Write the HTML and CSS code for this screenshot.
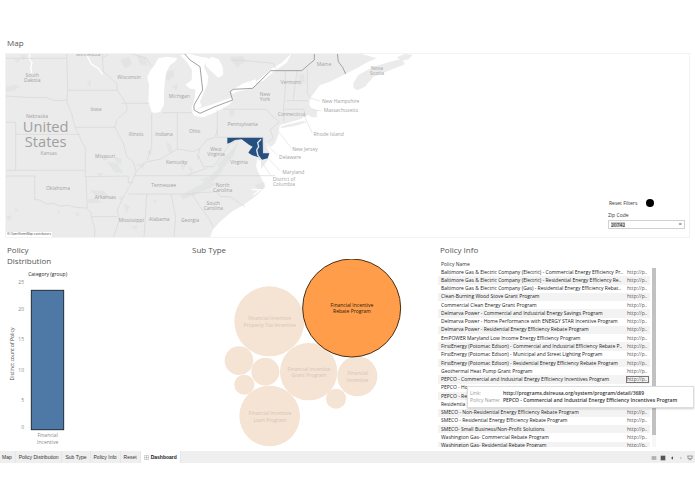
FILE: index.html
```html
<!DOCTYPE html>
<html lang="en">
<head>
<meta charset="utf-8">
<title>Policy Dashboard</title>
<link rel="stylesheet" href="styles.css">
</head>
<body>
<main class="dashboard">
  <section class="map-section">
    <h2 class="title">Map</h2>
    <div class="map">
      <svg class="map-art" viewBox="15 69 2055 555" role="img" aria-label="Map of the eastern United States">
        <path class="land" d="M15 69H1012L1075 69L1130 85L1105 95L1070 115L1040 130L1020 140L990 155L960 165L945 185L930 205L928 225L935 235L952 240L950 262L935 262L925 255L900 268L865 278L842 284L838 290L835 315L825 340L812 352L798 340L808 370L802 392L784 417L780 392L774 390L772 420L788 452L796 470L765 500L730 525L695 545L660 575L638 600L630 624H15Z"/>
        <path class="land" d="M1060 160L1075 135L1120 110L1160 98L1205 86L1215 103L1165 122L1120 140L1095 170L1072 181L1061 175ZM1190 82L1215 72L1238 74L1226 88L1206 92ZM840 291L865 283L910 273L922 276L885 288L845 294Z"/>
        <g class="terrain">
          <path d="M15 172l30-8 16 6-22 12-24 4zM40 90l24-6-10 14zM60 76l22 0-12 16zM360 90l28-10 8 22-20 14zM410 75l26 8 6 24-22-4zM495 125l25-5 4 18-20 14-10-8zM515 170l20-10-5 22zM560 485l40-20 60-10-30 20-50 22-36 2zM600 468l60-58 20-10-24 38-36 34zM650 405l40-40 26-30-16 44-34 40zM320 395l30 4 20 30-26-2zM345 380l18 6 2 18-18-8zM270 480l40 2 22 22-44-6zM262 508l28-4 14 14-36 2zM355 500l16 0-6 14zM372 520l18 10-12 20zM500 335l14 10 4 24-14-4zM545 390l12 10-6 20-8-8zM565 410l14 4-4 18zM590 370l10 12-8 12zM692 80l38-2 6 16-24 18-14-14zM686 242l14-4 6 14-14 10zM895 135l16-4 4 24-14 12zM15 560l22-4-8 18zM42 535l14 4-8 8zM170 545l8-4 2 10zM228 545l12 8-10 8zM260 155l14-5-4 22zM392 590l22-4-6 14zM460 508l12 6-10 8zM765 465l28-8 0 18-18 4zM440 365l14-8 0 20zM405 405l30-8-4 16zM305 385l10-10 10 8-10 10zM290 430l18 0-6 10zM540 495l20-5 10 10-22 8zM600 450l24-10 0 16z"/>
        </g>
        <path class="water" d="M455 245L445 215L447 165L442 140L452 120L462 108L475 85L500 80L532 84L525 95L510 105L500 125L495 150L492 190L492 225L480 246L463 249ZM540 75L570 72L600 80L625 84L612 110L625 140L622 165L612 185L600 215L605 228L582 244L574 238L585 200L586 178L570 176L556 164L575 150L576 120L560 95ZM620 90L636 80L656 88L668 110L670 135L655 143L635 125L618 108ZM575 245L600 235L640 222L688 205L702 205L690 222L650 245L610 262L585 258ZM693 182L730 160L768 148L769 165L750 177L710 185L698 193ZM765 158L815 116L845 98L876 69L860 98L824 122L790 152Z"/>
        <path class="river" d="M90 69l-2 18 8 12-4 16 3 14M262 78l12 24 22 14 12 18"/>
        <path class="river" d="M774 388l-4 20 8 22M782 390l-2 24M755 478l30 2M760 495l18-14"/>
        <path class="state" d="M15 85H200M200 69L203 181H352M15 198L80 202 140 203 165 212 203 210M203 181L200 215 215 250 225 292 238 318 250 345 256 350V440M225 292H345M47 313H238M15 277H47V421M15 421H256M15 438H104V508L118 510 140 522 160 520 180 528 205 526 225 532 260 534M256 440L385 438V458H395M258 440L262 537 272 545 274 560H352M274 560L285 600 283 624M308 69V100L310 125 350 160 352 181 378 220 382 240 350 270 345 292 370 340 380 380 400 395 408 425 395 458 370 500 352 540 358 570 340 624M308 85L330 69M365 220H448M388 69L440 85 454 110M455 250V350L442 390M487 248H575M532 250V357M408 425L440 395 480 388 510 370 532 357 580 365 600 355 620 330 645 322 652 300M652 240V322M404 437H825M385 492H575M440 492L432 624M513 492L527 560 522 624M575 490L600 530 625 562 640 592M575 490L650 485 662 500 690 500 735 530M594 375L610 410 640 410 670 370 690 340 715 330M560 436L620 415M594 375L600 355M652 322H790M670 238H800L808 250 838 275 810 300 820 325 805 335M856 122V180L850 240 852 278M892 122L885 165 880 210M860 212H925M922 115V190L932 205M850 238H912L915 262M791 323V370H808M690 90L735 92 780 96 820 100 828 118"/>
        <path class="leader" d="M930 204L960 213M935 240L965 242M915 262L937 310M836 305L875 355M800 345L832 375M806 387L842 424M765 365L812 436"/>
        <path class="country" d="M552 69L570 90L600 110L608 180L582 225V240L600 250L645 230L698 210L690 185L700 178L758 175L812 122H905L925 105L943 90V69M1012 69L1015 95L1028 112L1037 132"/>
        <path class="selected" d="M682 323H788L789 370H808L803 385L786 389L778 379L773 373L775 382L755 375L745 368L750 360L758 350L748 345L735 335L725 328L705 330L690 338L682 341Z"/>
        <path class="bay" d="M783 328L773 338L776 350L770 360L774 378"/>
        <g class="places">
          <text x="265" y="77">Minnesota</text>
          <text x="97" y="140">South</text><text x="97" y="155">Dakota</text>
          <text x="387" y="148">Wisconsin</text>
          <text x="538" y="204">Michigan</text>
          <text x="288" y="244">Iowa</text>
          <text x="111" y="263">Nebraska</text>
          <text x="408" y="319">Illinois</text>
          <text x="492" y="319">Indiana</text>
          <text x="584" y="310">Ohio</text>
          <text x="146" y="374">Kansas</text>
          <text x="315" y="383">Missouri</text>
          <text x="530" y="401">Kentucky</text>
          <text x="174" y="480">Oklahoma</text>
          <text x="316" y="506">Arkansas</text>
          <text x="491" y="471">Tennessee</text>
          <text x="394" y="575">Mississippi</text>
          <text x="478" y="574">Alabama</text>
          <text x="570" y="575">Georgia</text>
          <text x="648" y="363">West</text><text x="648" y="378">Virginia</text>
          <text x="717" y="401">Virginia</text>
          <text x="668" y="472">North</text><text x="668" y="487">Carolina</text>
          <text x="640" y="524">South</text><text x="640" y="539">Carolina</text>
          <text x="728" y="289">Pennsylvania</text>
          <text x="795" y="199">New</text><text x="795" y="214">York</text>
          <text x="872" y="161">Vermont</text>
          <text x="972" y="107">Maine</text>
          <text x="875" y="257">Connecticut</text>
          <text x="1131" y="120">Nova</text><text x="1131" y="135">Scotia</text>
          <text x="1052" y="73">New Brunswick</text>
          <text x="1022" y="218">New Hampshire</text>
          <text x="1023" y="247">Massachusetts</text>
          <text x="986" y="318">Rhode Island</text>
          <text x="915" y="362">New Jersey</text>
          <text x="870" y="387">Delaware</text>
          <text x="880" y="432">Maryland</text>
          <text x="852" y="452">District of</text><text x="852" y="467">Columbia</text>
        </g>
        <g class="nation"><text x="137" y="306">United</text><text x="137" y="350">States</text></g>
      </svg>
      <small class="credit">© OpenStreetMap contributors</small>
      <form class="filters">
        <button type="button" class="reset">Reset Filters <span class="dot"></span></button>
        <label class="zip-label" for="zip">Zip Code</label>
        <div class="zip-box">
          <span class="zip-field"><input id="zip" type="text" value="20742"></span>
          <button type="button" class="clear" aria-label="Clear">×</button>
        </div>
      </form>
    </div>
  </section>

  <div class="panels">
    <section class="panel">
      <h2 class="title narrow">Policy Distribution</h2>
      <svg class="chart bar-chart" viewBox="15 84 555 540" role="img" aria-label="Distinct count of Policy by category">
        <text class="head" x="143" y="109">Category (group)</text>
        <g class="ticks">
          <text x="72" y="133">25</text><text x="72" y="213">20</text><text x="72" y="304">15</text>
          <text x="72" y="395">10</text><text x="72" y="486">5</text><text x="72" y="566">0</text>
        </g>
        <text class="axis" transform="translate(41 342) rotate(-90)">Distinct count of Policy</text>
        <rect class="bar" x="94" y="151" width="97" height="418"/>
        <g class="category"><text x="143" y="592">Financial</text><text x="143" y="613">Incentive</text></g>
      </svg>
    </section>

    <section class="panel">
      <h2 class="title">Sub Type</h2>
      <svg class="chart" viewBox="0 45 744 576" role="img" aria-label="Policies by sub type">
        <defs><clipPath id="plot"><rect x="0" y="57" width="744" height="564"/></clipPath></defs>
        <g class="bubbles" clip-path="url(#plot)">
          <circle cx="238" cy="244" r="105"/><circle cx="147" cy="362" r="43"/>
          <circle cx="226" cy="395" r="42"/><circle cx="163" cy="434" r="30"/>
          <circle cx="356" cy="395" r="86"/><circle cx="502" cy="409" r="60"/>
          <circle cx="438" cy="476" r="30"/><circle cx="239" cy="528" r="91"/>
          <circle class="active" cx="485" cy="204" r="147"/>
        </g>
        <g class="faded">
          <text x="239" y="241">Financial Incentive</text><text x="239" y="261">Property Tax Incentive</text>
          <text x="357" y="392">Financial Incentive</text><text x="357" y="412">Grant Program</text>
          <text x="503" y="406">Financial</text><text x="503" y="426">Incentive</text>
          <text x="240" y="526">Financial Incentive</text><text x="240" y="546">Loan Program</text>
        </g>
        <g class="strong"><text x="486" y="200">Financial Incentive</text><text x="486" y="220">Rebate Program</text></g>
      </svg>
    </section>

    <section class="panel">
      <h2 class="title">Policy Info</h2>
      <div class="info">
        <div class="column-name">Policy Name</div>
        <div class="scroller">
          <table class="policies">
            <tbody>
              <tr><td>Baltimore Gas &amp; Electric Company (Electric) - Commercial Energy Efficiency Pr..</td><td><a href="#">http://p..</a></td></tr>
              <tr><td>Baltimore Gas &amp; Electric Company (Electric) - Residential Energy Efficiency Re..</td><td><a href="#">http://p..</a></td></tr>
              <tr><td>Baltimore Gas &amp; Electric Company (Gas) - Residential Energy Efficiency Rebat..</td><td><a href="#">http://p..</a></td></tr>
              <tr><td>Clean-Burning Wood Stove Grant Program</td><td><a href="#">http://p..</a></td></tr>
              <tr><td>Commercial Clean Energy Grant Program</td><td><a href="#">http://p..</a></td></tr>
              <tr><td>Delmarva Power - Commercial and Industrial Energy Savings Program</td><td><a href="#">http://p..</a></td></tr>
              <tr><td>Delmarva Power - Home Performance with ENERGY STAR Incentive Program</td><td><a href="#">http://p..</a></td></tr>
              <tr><td>Delmarva Power - Residential Energy Efficiency Rebate Program</td><td><a href="#">http://p..</a></td></tr>
              <tr><td>EmPOWER Maryland Low Income Energy Efficiency Program</td><td><a href="#">http://p..</a></td></tr>
              <tr><td>FirstEnergy (Potomac Edison) - Commercial and Industrial Efficiency Rebate P..</td><td><a href="#">http://p..</a></td></tr>
              <tr><td>FirstEnergy (Potomac Edison) - Municipal and Street Lighting Program</td><td><a href="#">http://p..</a></td></tr>
              <tr><td>FirstEnergy (Potomac Edison) - Residential Energy Efficiency Rebate Program</td><td><a href="#">http://p..</a></td></tr>
              <tr><td>Geothermal Heat Pump Grant Program</td><td><a href="#">http://p..</a></td></tr>
              <tr><td>PEPCO - Commercial and Industrial Energy Efficiency Incentives Program</td><td><a class="current" href="#">http://p..</a></td></tr>
              <tr><td>PEPCO - Ho</td><td></td></tr>
              <tr><td>PEPCO - Re</td><td></td></tr>
              <tr><td>Residentia</td><td></td></tr>
              <tr><td>SMECO - Non-Residential Energy Efficiency Rebate Program</td><td><a href="#">http://p..</a></td></tr>
              <tr><td>SMECO - Residential Energy Efficiency Rebate Program</td><td><a href="#">http://p..</a></td></tr>
              <tr><td>SMECO- Small Business/Non-Profit Solutions</td><td><a href="#">http://p..</a></td></tr>
              <tr><td>Washington Gas- Commercial Rebate Program</td><td><a href="#">http://p..</a></td></tr>
              <tr><td>Washington Gas- Residential Rebate Program</td><td><a href="#">http://p..</a></td></tr>
            </tbody>
          </table>
          <div class="track"><div class="thumb"></div></div>
        </div>
        <dl class="tooltip">
          <dt>Link:</dt><dd>http://programs.dsireusa.org/system/program/detail/3689</dd>
          <dt>Policy Name:</dt><dd>PEPCO - Commercial and Industrial Energy Efficiency Incentives Program</dd>
        </dl>
      </div>
    </section>
  </div>
</main>

<nav class="tabs">
  <a href="#">Map</a>
  <a href="#">Policy Distribution</a>
  <a href="#">Sub Type</a>
  <a href="#">Policy Info</a>
  <a href="#">Reset</a>
  <a class="open" href="#"><svg class="grid-icon" viewBox="0 0 15 15"><path d="M1 1H14V14H1ZM7.500 1V14M1 7.500H14"/></svg>Dashboard</a>
  <div class="tools">
    <button type="button" aria-label="Show tabs"><svg viewBox="0 0 18 18"><path class="pale" d="M2 3H16V15H2Z"/><path class="rule" d="M2 7H16M2 11H16"/></svg></button>
    <button type="button" aria-label="Show filmstrip"><svg viewBox="0 0 18 18"><path d="M2 2H16V16H2Z"/></svg></button>
    <button type="button" aria-label="Previous"><svg viewBox="0 0 18 18"><path d="M12 4V14L6 9Z"/></svg></button>
    <button type="button" aria-label="Next"><svg viewBox="0 0 18 18"><path class="pale" d="M7 5V13L12 9Z"/></svg></button>
    <button type="button" aria-label="Presentation mode"><svg viewBox="0 0 18 18"><path class="line" d="M1 3H17M3 3V11H15V3M9 11V14M6 16L9 13L12 16"/></svg></button>
  </div>
</nav>
</body>
</html>
```
FILE: styles.css
```css
* { box-sizing: border-box; }

body {
  margin: 0;
  background: #fff;
  color: #333;
  font-family: "Open Sans", "Noto Sans", sans-serif;
  font-size: 5px;
  overflow-x: hidden;
}

button {
  padding: 0;
  border: 0;
  background: none;
  color: inherit;
  font: inherit;
}

a { color: inherit; text-decoration: none; }

.dashboard { padding: 37px 5px 0; }

.title {
  margin: 0;
  padding-left: 2px;
  color: #555;
  font-size: 8px;
  font-weight: 400;
  line-height: 11px;
}

.narrow { max-width: 60px; }

.map-section { margin-bottom: 6px; }

.map {
  position: relative;
  margin-top: 5px;
  outline: 1px solid #f3f3f3;
  outline-offset: -1px;
}

.map-art { display: block; width: 100%; }

.land { fill: #ebebeb; }
.terrain { fill: #e2e5e4; }
.water { fill: #fff; }
.river { fill: none; stroke: #fff; stroke-width: 4; }
.state { fill: none; stroke: #d6d6d6; stroke-width: 2; }
.leader { fill: none; stroke: #e0e0e0; stroke-width: 2; }
.country { fill: none; stroke: #a2a2a2; stroke-width: 3; }
.selected { fill: #25507f; }
.bay { fill: none; stroke: #dfe5eb; stroke-width: 4; }

.places { fill: #a3a3a3; font-size: 15px; text-anchor: middle; }
.nation { fill: #a0a0a0; font-size: 44px; text-anchor: middle; }

.credit {
  position: absolute;
  left: 1px;
  bottom: 1px;
  padding: 0 1px;
  background: #fff;
  color: #555;
  font-family: Inter, sans-serif;
  font-size: 3px;
  line-height: 5px;
}

.filters {
  position: absolute;
  right: 5px;
  bottom: 9px;
  width: 77px;
}

.reset {
  display: flex;
  align-items: center;
  gap: 9px;
  margin: 0 0 5px 1px;
  font-weight: 500;
  line-height: 8px;
}

.dot { width: 8px; height: 8px; border-radius: 50%; background: #000; }

.zip-label { display: block; line-height: 7px; }

.zip-box {
  display: flex;
  align-items: center;
  height: 9px;
  margin-top: 1px;
  padding: 0 2px;
  border: 1px solid #d0d0d0;
  background: #fff;
}

.zip-field { flex: 1; }

.zip-field input {
  display: block;
  width: 14px;
  height: 5px;
  padding: 0;
  border: 0;
  background: #c8c8c8;
  color: #333;
  font: inherit;
  line-height: 5px;
}

.clear { font-size: 6px; line-height: 5px; }

.panels {
  display: grid;
  grid-template-columns: 185fr 248fr 252fr;
}

.panel { min-width: 0; }

.chart { display: block; width: 100%; font-size: 15px; text-anchor: middle; }
.bar-chart { margin-top: 2px; }

.head { fill: #222; font-weight: 500; }
.axis { fill: #444; }
.ticks { fill: #888; text-anchor: end; }
.category { fill: #888; }
.bar { fill: #4e79a7; stroke: #222b35; stroke-width: 3; }

.bubbles { fill: #f5e3d3; }
.active { fill: #ff9d4a; stroke: #4a3018; stroke-width: 3; }
.faded { fill: #d6c5b8; }
.strong { fill: #2a1a0a; font-weight: 500; }

.info { position: relative; padding-top: 5px; }

.column-name { padding-left: 3px; font-weight: 500; line-height: 8px; }

.scroller {
  display: flex;
  gap: 2px;
  height: 179px;
  overflow: hidden;
}

.policies {
  width: 212px;
  height: 182px;
  border-collapse: collapse;
  table-layout: fixed;
  color: #222;
  line-height: 7px;
}

.policies tr:nth-child(even) { background: #f3f3f3; }

.policies td {
  padding: 0 0 0 3px;
  font-weight: 500;
  white-space: nowrap;
}

.policies td:last-child {
  width: 25px;
  padding: 0 1px;
  font-weight: 400;
}

.policies a { display: block; padding-left: 1px; color: #555; }
.policies .current { outline: 1px solid #777; outline-offset: -1px; }

.track { width: 4px; background: #f7f7f7; }
.thumb { height: 167px; background: #c1c1c1; }

.tooltip {
  position: absolute;
  top: 131px;
  right: -4px;
  left: 29px;
  display: grid;
  grid-template-columns: 32px 1fr;
  column-gap: 1px;
  margin: 0;
  padding: 3px 2px;
  border: 1px solid #ddd;
  background: #fff;
  box-shadow: 0 1px 2px #0003;
  line-height: 7px;
  white-space: nowrap;
}

.tooltip dt { color: #999; }
.tooltip dd { margin: 0; font-weight: 600; }

.tabs {
  display: flex;
  height: 12px;
  margin-top: 3px;
  background: #efefef;
  font-family: "Liberation Sans", sans-serif;
  line-height: 12px;
}

.tabs a {
  display: flex;
  align-items: center;
  gap: 2px;
  padding: 0 3px 0 2px;
  border-right: 1px solid #e6e6e6;
}

.tabs a + a { padding-left: 3px; }

.tabs .open { background: #fff; color: #222; font-weight: 700; }

.grid-icon { width: 5px; height: 5px; fill: none; stroke: #777; stroke-width: 1; }

.tools { display: flex; align-items: center; gap: 3px; margin-left: auto; padding: 2px 2px 0 0; }
.tools svg { display: block; width: 6px; height: 6px; fill: #555; }
.tools .pale { fill: #bbb; }
.tools .rule { fill: none; stroke: #999; stroke-width: 1; }
.tools .line { fill: none; stroke: #777; stroke-width: 2; }
```
